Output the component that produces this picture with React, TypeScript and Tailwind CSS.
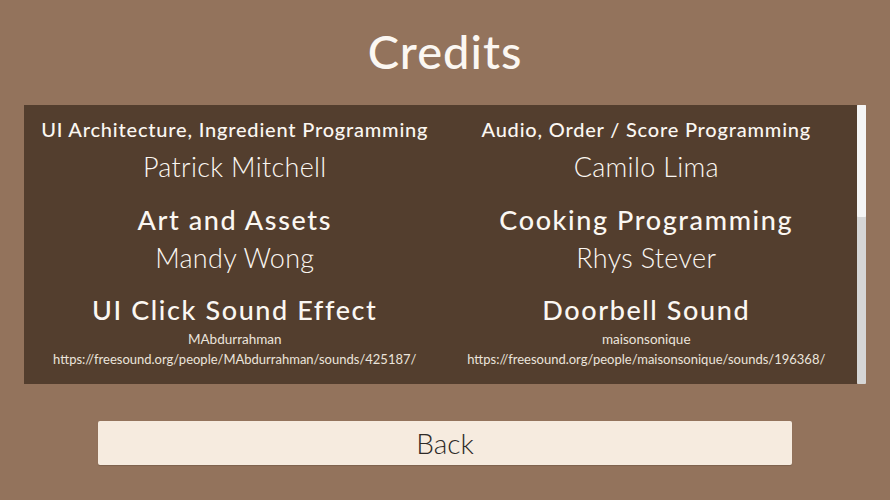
const credits = [
  { role: "UI Architecture, Ingredient Programming", name: "Patrick Mitchell", small: true },
  { role: "Audio, Order / Score Programming", name: "Camilo Lima", small: true },
  { role: "Art and Assets", name: "Mandy Wong" },
  { role: "Cooking Programming", name: "Rhys Stever" },
];

const sounds = [
  { role: "UI Click Sound Effect", by: "MAbdurrahman", url: "https://freesound.org/people/MAbdurrahman/sounds/425187/" },
  { role: "Doorbell Sound", by: "maisonsonique", url: "https://freesound.org/people/maisonsonique/sounds/196368/" },
];

export default function App() {
  return (
    <div className="w-[890px] h-[500px] bg-[#93735c] flex flex-col font-['Lato',sans-serif] text-[#fbf7f2]">
      {/* Title */}
      <div className="h-[105px] flex items-center justify-center pb-[2px]">
        <h1 className="text-[47px] leading-none font-medium tracking-[1px]">Credits</h1>
      </div>

      {/* Scroll panel */}
      <div className="mx-[24px] h-[279px] flex">
        <div className="flex-1 bg-[#533e2e] px-[5px] pt-[9px] grid grid-cols-2 content-start">
          {credits.map((c) => (
            <div key={c.role} className={`flex flex-col items-center ${c.small ? "" : "pt-[20px]"}`}>
              <div
                className={`h-[30px] flex items-center whitespace-nowrap font-medium ${
                  c.small ? "text-[20px] tracking-[0.8px]" : "text-[27px] tracking-[1.6px]"
                }`}
              >
                {c.role}
              </div>
              <div className="h-[36px] mt-[5px] flex items-center text-[27px] font-light tracking-[0.3px]">{c.name}</div>
            </div>
          ))}
          {sounds.map((s) => (
            <div key={s.role} className="flex flex-col items-center pt-[19px]">
              <div className="h-[30px] flex items-center whitespace-nowrap text-[27px] font-medium tracking-[1.6px]">
                {s.role}
              </div>
              <div className="h-[20px] mt-[4px] flex items-center text-[13.5px] text-[#ebe4dc]">{s.by}</div>
              <div className="h-[20px] mt-[1px] flex items-center whitespace-nowrap text-[13px] text-[#ebe4dc]">{s.url}</div>
            </div>
          ))}
        </div>
        {/* Scrollbar */}
        <div className="w-[9px] bg-[#d6d6d6] flex flex-col rounded-[1px]">
          <div className="h-[112px] bg-[#f5f5f5] rounded-[1px]" />
        </div>
      </div>

      {/* Back button */}
      <div className="px-[98px] pt-[37px]">
        <button className="w-full h-[44px] bg-[#f6ebdf] rounded-[2px] shadow-[0_1px_1px_rgba(0,0,0,0.15)] text-[28px] text-[#2e2a27] font-light flex items-center justify-center">
          Back
        </button>
      </div>
    </div>
  );
}
